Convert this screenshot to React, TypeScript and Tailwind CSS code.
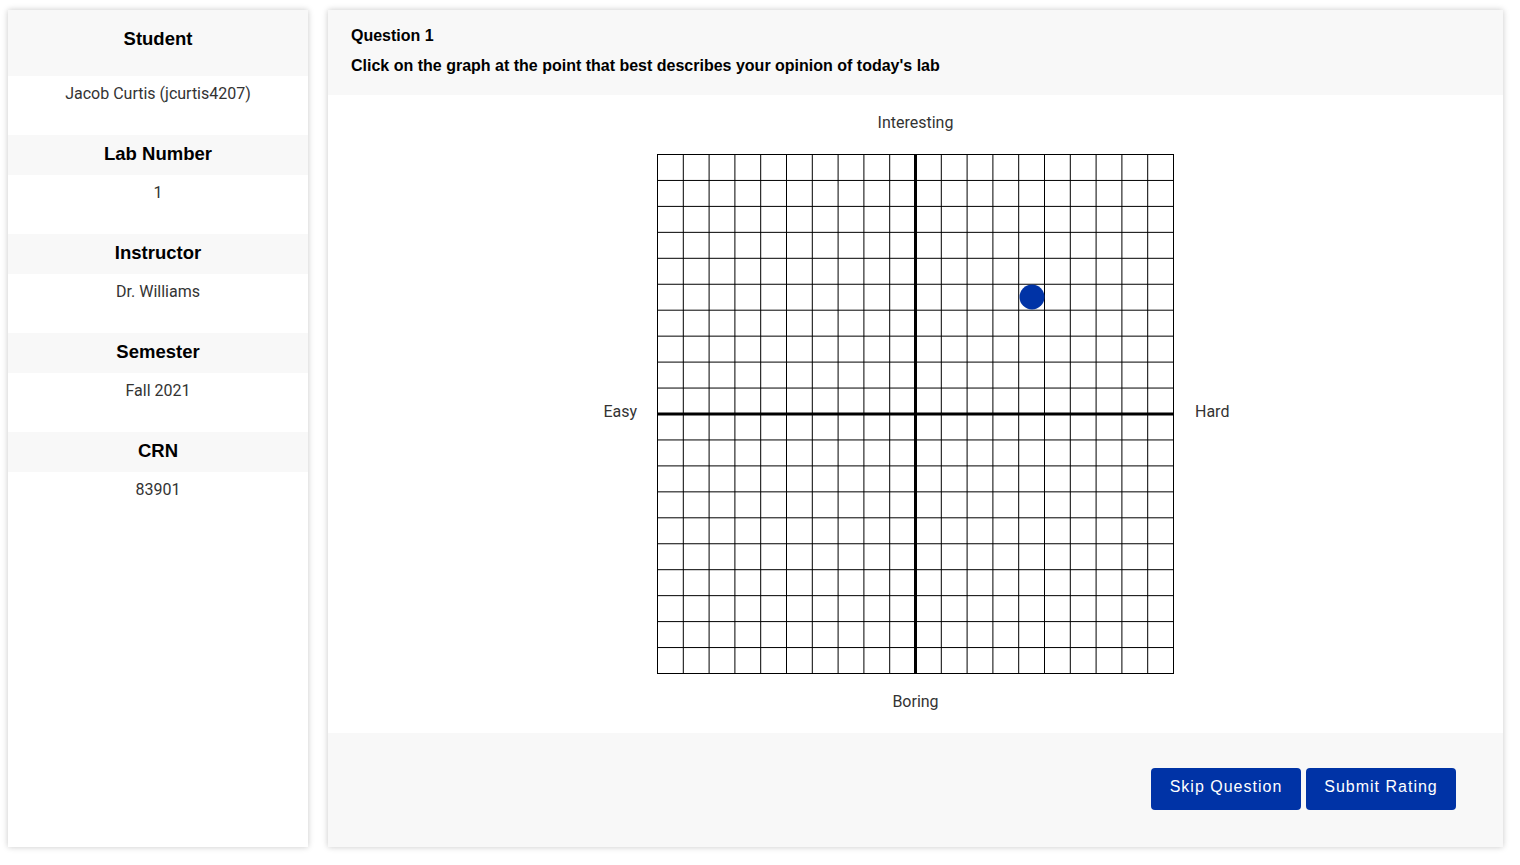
import React from "react";

const info = [
  { label: "Student", value: "Jacob Curtis (jcurtis4207)" },
  { label: "Lab Number", value: "1" },
  { label: "Instructor", value: "Dr. Williams" },
  { label: "Semester", value: "Fall 2021" },
  { label: "CRN", value: "83901" },
];

function Graph() {
  const w = 517;
  const h = 520;
  const cols = Array.from({ length: 21 }, (_, i) => i);
  return (
    <svg width={w} height={h} className="block">
      {cols.map((i) => {
        const x = 0.5 + (i * (w - 1)) / 20;
        return (
          <line key={"v" + i} x1={x} y1={0} x2={x} y2={h} stroke="#000" strokeWidth={i === 10 ? 3 : 1} />
        );
      })}
      {cols.map((i) => {
        const y = 0.5 + (i * (h - 1)) / 20;
        return (
          <line key={"h" + i} x1={0} y1={y} x2={w} y2={y} stroke="#000" strokeWidth={i === 10 ? 3 : 1} />
        );
      })}
      <circle cx={375} cy={143} r={12.5} fill="#0033a6" />
    </svg>
  );
}

export default function App() {
  return (
    <div className="flex h-[865px] w-[1520px] gap-[20px] bg-white pb-[18px] pl-[8px] pr-[17px] pt-[10px] font-['Roboto',sans-serif]">
      <aside className="flex w-[300px] flex-col bg-white shadow-[0_0_6px_rgba(0,0,0,0.22)]">
        {info.map((item, i) => (
          <div key={item.label}>
            <div
              className={
                "bg-[#f8f8f8] text-center font-['Liberation_Sans',sans-serif] text-[18.5px] font-bold leading-[20px] text-black " +
                (i === 0 ? "pb-[27px] pt-[19px]" : "pb-[11px] pt-[9px]")
              }
            >
              {item.label}
            </div>
            <div className="h-[59px] pt-[9px] text-center text-[16px] leading-[18px] text-[#333]">{item.value}</div>
          </div>
        ))}
      </aside>

      <main className="flex flex-1 flex-col bg-white shadow-[0_0_6px_rgba(0,0,0,0.22)]">
        <div className="h-[85px] bg-[#f8f8f8] px-[23px] pt-[17px] font-['Liberation_Sans',sans-serif]">
          <div className="text-[16px] font-bold leading-[18px] text-black">Question 1</div>
          <div className="mt-[12px] text-[16px] font-bold leading-[18px] text-black">
            Click on the graph at the point that best describes your opinion of today's lab
          </div>
        </div>

        <div className="flex h-[638px] flex-col items-center pt-[19px] text-[16px] leading-[18px] text-[#333]">
          <div>Interesting</div>
          <div className="mt-[22px] flex items-center">
            <div className="w-[80px] pb-[4px] pr-[20px] text-right">Easy</div>
            <Graph />
            <div className="w-[80px] pb-[4px] pl-[21px]">Hard</div>
          </div>
          <div className="mt-[19px]">Boring</div>
        </div>

        <div className="flex flex-1 items-start justify-end gap-[5px] bg-[#f8f8f8] pr-[47px] pt-[35px]">
          <button className="h-[42px] w-[150px] rounded-[4px] bg-[#0033a6] pb-[5px] font-['Liberation_Sans',sans-serif] text-[16px] tracking-[1px] text-white">
            Skip Question
          </button>
          <button className="h-[42px] w-[150px] rounded-[4px] bg-[#0033a6] pb-[5px] font-['Liberation_Sans',sans-serif] text-[16px] tracking-[1px] text-white">
            Submit Rating
          </button>
        </div>
      </main>
    </div>
  );
}
